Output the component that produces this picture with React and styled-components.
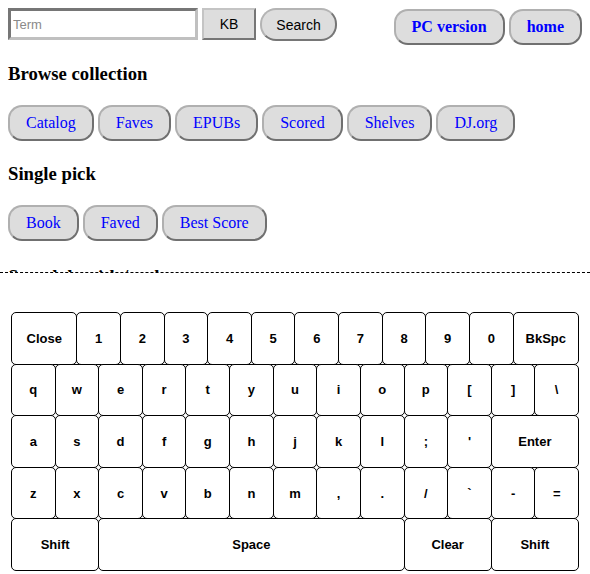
import styled, { createGlobalStyle } from "styled-components";

const GlobalStyle = createGlobalStyle`
  body {
    margin: 8px;
    font-family: "Liberation Serif", "Times New Roman", serif;
    background: #fff;
    color: #000;
  }
`;

const TopBar = styled.div`
  display: flex;
  justify-content: space-between;
  align-items: flex-start;
`;

const SearchForm = styled.form`
  display: flex;
  gap: 4px;
  align-items: flex-start;
`;

const TermInput = styled.input`
  box-sizing: border-box;
  width: 190px;
  height: 32px;
  padding: 0 2px;
  border: 3px solid;
  border-color: #767676 #c0c0c0 #c0c0c0 #767676;
  font: 13px "Liberation Sans", Arial, sans-serif;
  outline: none;

  &::placeholder {
    color: #8a8a8a;
  }
`;

const KbButton = styled.button`
  box-sizing: border-box;
  width: 54px;
  height: 32px;
  background: #dddddd;
  border: 2px solid;
  border-color: #c4c4c4 #767676 #767676 #c4c4c4;
  font: 14px "Liberation Sans", Arial, sans-serif;
  color: #000;
`;

const SearchButton = styled.button`
  box-sizing: border-box;
  width: 77px;
  height: 33px;
  background: #dddddd;
  border: 2px solid;
  border-color: #b4b4b4 #767676 #767676 #b4b4b4;
  border-radius: 16px;
  font: 14px "Liberation Sans", Arial, sans-serif;
  color: #000;
`;

const NavGroup = styled.div`
  display: flex;
  gap: 4px;
  margin-top: 1px;
`;

const Pill = styled.a`
  box-sizing: border-box;
  display: inline-block;
  height: 36px;
  padding: 0 16px;
  line-height: 32px;
  background: #dddddd;
  border: 2px solid;
  border-color: #b0b0b0 #707070 #707070 #b0b0b0;
  border-radius: 14px;
  color: blue;
  text-decoration: none;
  font-size: 16px;
  font-weight: ${(p) => (p.$bold ? 700 : 400)};
  white-space: nowrap;
`;

const Heading = styled.h3`
  font-size: 18.72px;
  margin: ${(p) => (p.$top ? p.$top : 18)}px 0 18px;
`;

const PillRow = styled.div`
  display: flex;
  gap: 4px;
  flex-wrap: wrap;
  padding: 2px 0 4px;
`;

const KeyboardPanel = styled.div`
  position: fixed;
  left: 0;
  right: 0;
  bottom: 0;
  height: 302px;
  background: #fff;
  border-top: 1px dashed #000;
  display: flex;
  justify-content: center;
  padding-top: 39px;
  box-sizing: border-box;
`;

const Keyboard = styled.div`
  width: 567px;
  height: 258px;
  display: grid;
  grid-template-columns: repeat(26, 1fr);
  grid-template-rows: repeat(5, 1fr);
  margin-right: 1px;
`;

const Key = styled.div`
  grid-column: span ${(p) => p.$span};
  margin: 0 -1px -1px 0;
  border: 1px solid #000;
  border-radius: 5px;
  display: flex;
  align-items: center;
  justify-content: center;
  font: bold 13px "Liberation Sans", Arial, sans-serif;
  color: #000;
  background: #fff;
`;

const rows = [
  [["Close", 3], ..."1234567890".split("").map((k) => [k, 2]), ["BkSpc", 3]],
  "qwertyuiop[]\\".split("").map((k) => [k, 2]),
  [..."asdfghjkl;'".split("").map((k) => [k, 2]), ["Enter", 4]],
  "zxcvbnm,./`-=".split("").map((k) => [k, 2]),
  [
    ["Shift", 4],
    ["Space", 14],
    ["Clear", 4],
    ["Shift", 4],
  ],
];

const browse = ["Catalog", "Faves", "EPUBs", "Scored", "Shelves", "DJ.org"];
const single = ["Book", "Faved", "Best Score"];

export default function App() {
  return (
    <>
      <GlobalStyle />
      <TopBar>
        <SearchForm onSubmit={(e) => e.preventDefault()}>
          <TermInput placeholder="Term" />
          <KbButton type="button">KB</KbButton>
          <SearchButton type="submit">Search</SearchButton>
        </SearchForm>
        <NavGroup>
          <Pill $bold href="#">
            PC version
          </Pill>
          <Pill $bold href="#">
            home
          </Pill>
        </NavGroup>
      </TopBar>

      <Heading>Browse collection</Heading>
      <PillRow>
        {browse.map((b) => (
          <Pill key={b} href="#">
            {b}
          </Pill>
        ))}
      </PillRow>

      <Heading>Single pick</Heading>
      <PillRow>
        {single.map((b) => (
          <Pill key={b} href="#">
            {b}
          </Pill>
        ))}
      </PillRow>

      <Heading $top={21}>Search by title/author</Heading>

      <KeyboardPanel>
        <Keyboard>
          {rows.map((row, r) =>
            row.map(([label, span], i) => (
              <Key key={r + "-" + i} $span={span}>
                {label}
              </Key>
            ))
          )}
        </Keyboard>
      </KeyboardPanel>
    </>
  );
}
